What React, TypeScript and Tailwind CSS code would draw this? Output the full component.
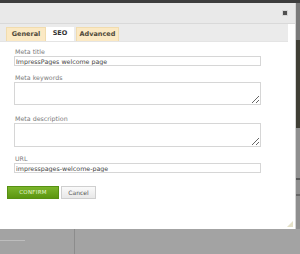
import React from "react";

const font = { fontFamily: '"DejaVu Sans", Verdana, sans-serif' };

export default function App() {
  return (
    <div className="w-[300px] h-[254px] bg-[#a3a3a3] flex flex-col overflow-hidden" style={font}>
      <div className="h-[3px] bg-[#3e3e3e] shrink-0" />
      <div className="flex h-[226px] shrink-0">
        {/* modal */}
        <div className="w-[296px] flex flex-col bg-white border-r border-[#d4d4d4] relative">
          <div className="h-[21px] bg-[#e9e9e9] border-b border-[#d9d9d9] flex items-center justify-end pr-[7px]">
            <div className="w-[6px] h-[6px] bg-[#d6d6d6] flex items-center justify-center">
              <div className="w-[4px] h-[4px] bg-[#505050]" />
            </div>
          </div>
          <div className="h-[18px] mr-[7px] bg-[#ebebeb] border-b border-[#e4e4e4] flex items-end pl-[6px]">
            <div className="h-[14px] w-[40px] bg-[#fbe9c4] border border-[#f1dcae] border-b-0 flex items-center justify-center text-[6.5px] font-bold text-[#4f4a3a]">
              General
            </div>
            <div className="h-[14px] w-[28px] bg-white flex items-center justify-center text-[6.5px] font-bold text-[#333]">
              SEO
            </div>
            <div className="h-[14px] w-[43px] ml-[2px] bg-[#fbe9c4] border border-[#f1dcae] border-b-0 flex items-center justify-center text-[6.5px] font-bold text-[#4f4a3a]">
              Advanced
            </div>
          </div>
          <div className="flex flex-col pl-[14px] pt-[6px]">
            <div className="h-[8px] leading-[8px] pl-[1px] text-[6.3px] text-[#7a7a7a]">Meta title</div>
            <input
              readOnly
              value="ImpressPages welcome page"
              className="w-[247px] h-[10px] border border-[#d6d6d6] px-[1px] text-[6.3px] text-[#444] outline-none"
              style={font}
            />
            <div className="h-[8px] leading-[8px] mt-[8px] pl-[1px] text-[6.3px] text-[#7a7a7a]">Meta keywords</div>
            <textarea
              readOnly
              className="w-[247px] h-[23px] border border-[#d6d6d6] outline-none block"
            />
            <div className="h-[8px] leading-[8px] mt-[10px] pl-[1px] text-[6.3px] text-[#7a7a7a]">Meta description</div>
            <textarea
              readOnly
              className="w-[247px] h-[24px] border border-[#d6d6d6] outline-none block"
            />
            <div className="h-[8px] leading-[8px] mt-[8px] pl-[1px] text-[6.3px] text-[#7a7a7a]">URL</div>
            <input
              readOnly
              value="impresspages-welcome-page"
              className="w-[247px] h-[10px] border border-[#d6d6d6] px-[1px] text-[6.3px] text-[#444] outline-none"
              style={font}
            />
          </div>
          <div className="flex gap-[2px] pl-[7px] mt-[13px]">
            <div className="w-[52px] h-[13px] bg-gradient-to-b from-[#7bb52a] to-[#5b960f] border border-[#569012] flex items-center justify-center text-[5.5px] text-[#e8f5d0] tracking-[0.3px]">
              CONFIRM
            </div>
            <div className="w-[35px] h-[13px] bg-gradient-to-b from-[#fafafa] to-[#e8e8e8] border border-[#cfcfcf] flex items-center justify-center text-[6px] text-[#555]">
              Cancel
            </div>
          </div>
          <svg className="absolute right-[2px] bottom-[2px]" width="6" height="6" viewBox="0 0 6 6">
            <path d="M6 0 L6 6 L0 6 Z" fill="#e4e0c8" />
          </svg>
        </div>
        {/* right strip */}
        <div className="w-[4px] flex flex-col">
          <div className="h-[37px] bg-[#7a7a7a]" />
          <div className="h-[88px] bg-[#3f3e35]" />
          <div className="flex-1 bg-[#8f8f8f] flex flex-col gap-[14px] pt-[50px]">
            <div className="h-[2px] bg-[#555]" />
            <div className="h-[2px] bg-[#666]" />
          </div>
        </div>
      </div>
      <div className="flex-1 flex">
        <div className="w-[75px] border-r border-[#8c8c8c] pt-[11px]">
          <div className="w-[25px] h-px bg-[#bdbdbd]" />
        </div>
      </div>
    </div>
  );
}
